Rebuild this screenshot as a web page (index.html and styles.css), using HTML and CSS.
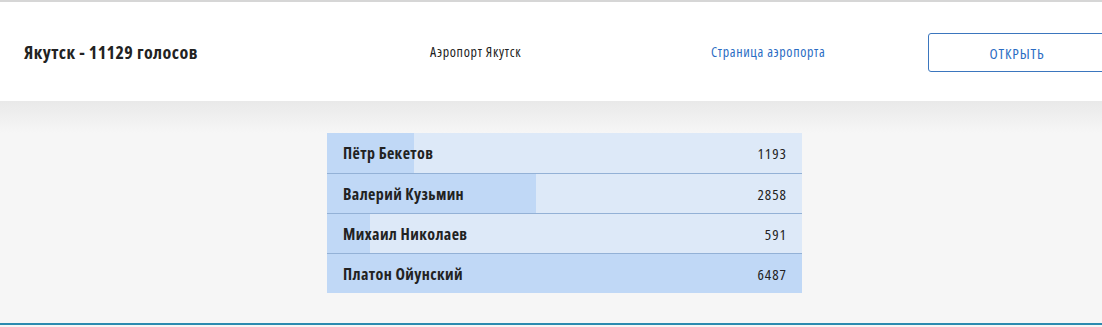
FILE: index.html
```html
<!DOCTYPE html>
<html lang="ru">
<head>
	<meta charset="utf-8">
	<title>Якутск - голосование</title>
	<link rel="stylesheet" href="styles.css">
</head>
<body>
	<div class="page">
		<div class="head">
			<div class="title">Якутск - 11129 голосов</div>
			<div class="airport">Аэропорт Якутск</div>
			<a class="link" href="#">Страница аэропорта</a>
			<button class="open">ОТКРЫТЬ</button>
		</div>
		<div class="main">
			<ul class="votes">
				<li class="vote">
					<span class="bar" style="width: 18.39%"></span>
					<span class="name">Пётр Бекетов</span>
					<span class="count">1193</span>
				</li>
				<li class="vote">
					<span class="bar" style="width: 44.06%"></span>
					<span class="name">Валерий Кузьмин</span>
					<span class="count">2858</span>
				</li>
				<li class="vote">
					<span class="bar" style="width: 9.11%"></span>
					<span class="name">Михаил Николаев</span>
					<span class="count">591</span>
				</li>
				<li class="vote">
					<span class="bar" style="width: 100%"></span>
					<span class="name">Платон Ойунский</span>
					<span class="count">6487</span>
				</li>
			</ul>
		</div>
	</div>
</body>
</html>
```

FILE: styles.css
```css
html, body { margin: 0; padding: 0; }
body {
	width: 1102px;
	height: 327px;
	overflow: hidden;
	background-color: #f6f6f6;
	font-family: "Open Sans", sans-serif;
	font-stretch: 75%;
	color: #222222;
}
.page {
	height: 325px;
	border-top: 2px solid #d6d6d6;
	border-bottom: 2px solid #2b8bb0;
	box-sizing: border-box;
	display: flex;
	flex-direction: column;
}

/* header */
.head {
	height: 99px;
	background-color: #ffffff;
	display: flex;
	align-items: center;
	padding-left: 24px;
	flex-shrink: 0;
	overflow: hidden;
}
.head > * { flex-shrink: 0; }
.title { font-size: 18px; font-weight: bold; letter-spacing: 0.45px; width: 406px; }
.airport { font-size: 14px; letter-spacing: 0.7px; width: 281px; }
.link { font-size: 14px; letter-spacing: 0.65px; color: #2a6cc3; text-decoration: none; width: 217px; }
.open {
	width: 178px;
	height: 39px;
	margin-top: 1px;
	border: 1px solid #3b76be;
	border-radius: 3px;
	background-color: #ffffff;
	color: #2a6cc3;
	font-family: inherit;
	font-stretch: inherit;
	font-size: 15px;
	letter-spacing: 0.85px;
	padding: 2px 0 0;
}

/* results */
.main {
	flex: 1;
	background: linear-gradient(#e9e9e9, #f6f6f6 32px);
	padding-top: 32px;
}
.votes {
	list-style: none;
	margin: 0 0 0 327px;
	padding: 0;
	width: 475px;
}
.vote {
	position: relative;
	height: 40px;
	box-sizing: border-box;
	display: flex;
	align-items: center;
	justify-content: space-between;
	padding: 0 16px;
	background-color: #dde9f8;
	border-top: 1px solid #93b1d6;
}
.vote:first-child { border-top: none; }
.bar {
	position: absolute;
	left: 0;
	top: 0;
	bottom: 0;
	background-color: #c0d8f6;
}
.name { position: relative; font-size: 16px; font-weight: bold; letter-spacing: 0.4px; }
.count { position: relative; font-size: 15px; letter-spacing: 1px; margin-right: -1px; }
```
